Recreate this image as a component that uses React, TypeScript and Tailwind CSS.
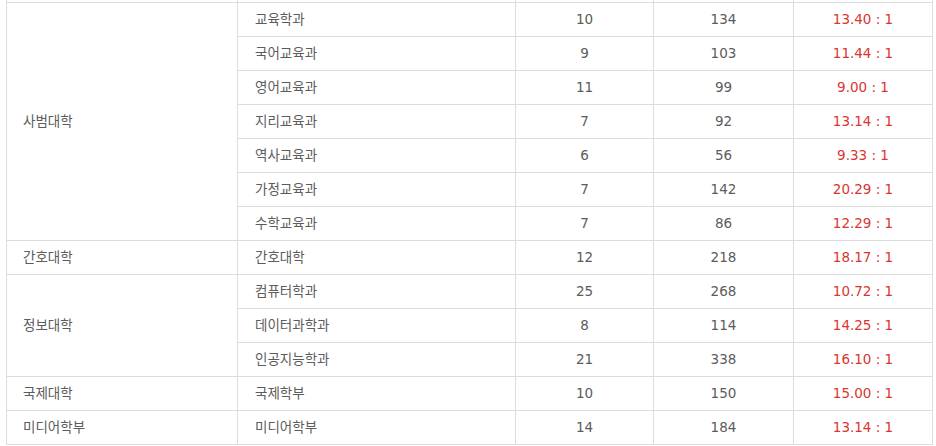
import React from "react";

type Row = { college?: string; span?: number; dept: string; quota: number; applicants: number; ratio: string };

const rows: Row[] = [
  { college: "사범대학", span: 7, dept: "교육학과", quota: 10, applicants: 134, ratio: "13.40 : 1" },
  { dept: "국어교육과", quota: 9, applicants: 103, ratio: "11.44 : 1" },
  { dept: "영어교육과", quota: 11, applicants: 99, ratio: "9.00 : 1" },
  { dept: "지리교육과", quota: 7, applicants: 92, ratio: "13.14 : 1" },
  { dept: "역사교육과", quota: 6, applicants: 56, ratio: "9.33 : 1" },
  { dept: "가정교육과", quota: 7, applicants: 142, ratio: "20.29 : 1" },
  { dept: "수학교육과", quota: 7, applicants: 86, ratio: "12.29 : 1" },
  { college: "간호대학", span: 1, dept: "간호대학", quota: 12, applicants: 218, ratio: "18.17 : 1" },
  { college: "정보대학", span: 3, dept: "컴퓨터학과", quota: 25, applicants: 268, ratio: "10.72 : 1" },
  { dept: "데이터과학과", quota: 8, applicants: 114, ratio: "14.25 : 1" },
  { dept: "인공지능학과", quota: 21, applicants: 338, ratio: "16.10 : 1" },
  { college: "국제대학", span: 1, dept: "국제학부", quota: 10, applicants: 150, ratio: "15.00 : 1" },
  { college: "미디어학부", span: 1, dept: "미디어학부", quota: 14, applicants: 184, ratio: "13.14 : 1" },
];

const cell = "border border-[#dddddd] h-[34px] p-0 align-middle";

export default function App() {
  return (
    <div className="w-[936px] h-[446px] overflow-hidden bg-white">
      <table
        className="table-fixed border-collapse ml-[6px] -mt-[32px] w-[926px] text-[13.5px] text-[#5c5c5c]"
        style={{ fontFamily: '"DejaVu Sans", "Noto Sans CJK KR", sans-serif' }}
      >
        <colgroup>
          <col className="w-[231px]" />
          <col className="w-[278px]" />
          <col className="w-[138px]" />
          <col className="w-[140px]" />
          <col className="w-[139px]" />
        </colgroup>
        <thead>
          <tr className="h-[34px]">
            <th className={cell}></th>
            <th className={cell}></th>
            <th className={cell}></th>
            <th className={cell}></th>
            <th className={cell}></th>
          </tr>
        </thead>
        <tbody>
          {rows.map((r, i) => (
            <tr key={i} className="h-[34px]">
              {r.college && (
                <td className={`${cell} pl-[16px] text-left`} rowSpan={r.span}>
                  {r.college}
                </td>
              )}
              <td className={`${cell} pl-[17px] text-left`}>{r.dept}</td>
              <td className={`${cell} text-center`}>{r.quota}</td>
              <td className={`${cell} text-center`}>{r.applicants}</td>
              <td className={`${cell} text-center text-[#d93630]`}>{r.ratio}</td>
            </tr>
          ))}
        </tbody>
      </table>
    </div>
  );
}
